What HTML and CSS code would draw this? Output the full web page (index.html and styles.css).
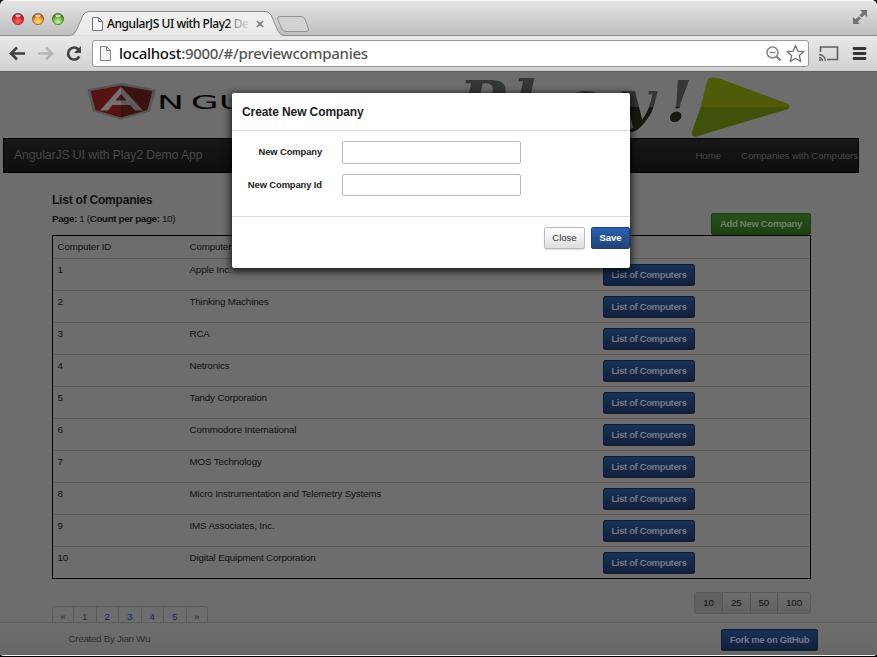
FILE: index.html
```html
<!DOCTYPE html>
<html lang="en">
<head>
<meta charset="utf-8">
<title>AngularJS UI with Play2 Demo App</title>
<link rel="stylesheet" href="styles.css">
</head>
<body>
<div class="window">
  <header class="tabstrip">
    <svg class="tabs" width="877" height="36" viewBox="0 0 877 36">
      <defs>
        <linearGradient id="strip" x1="0" y1="0" x2="0" y2="1"><stop offset="0" stop-color="#e6e6e6"/><stop offset="1" stop-color="#bdbdbd"/></linearGradient>
        <linearGradient id="tab" x1="0" y1="0" x2="0" y2="1"><stop offset="0" stop-color="#f1f1f1"/><stop offset="1" stop-color="#e8e8e8"/></linearGradient>
        <linearGradient id="fade" gradientUnits="userSpaceOnUse" x1="228" y1="0" x2="252" y2="0"><stop offset="0" stop-color="#111"/><stop offset=".2" stop-color="#888"/><stop offset="1" stop-color="#e8e8e8"/></linearGradient>
        <radialGradient id="red" cx=".5" cy=".72" r=".65"><stop offset="0" stop-color="#ff6b69"/><stop offset=".55" stop-color="#e7313b"/><stop offset="1" stop-color="#8d1822"/></radialGradient>
        <radialGradient id="amber" cx=".5" cy=".75" r=".65"><stop offset="0" stop-color="#ffe07a"/><stop offset=".55" stop-color="#f3a83b"/><stop offset="1" stop-color="#96591a"/></radialGradient>
        <radialGradient id="green" cx=".5" cy=".75" r=".65"><stop offset="0" stop-color="#cdf59b"/><stop offset=".55" stop-color="#7cc352"/><stop offset="1" stop-color="#3d7325"/></radialGradient>
      </defs>
      <rect width="877" height="36" fill="url(#strip)"/>
      <path d="M0 .5H877" stroke="#f4f4f4"/>
      <path d="M0 0H4Q1 1 0 4ZM877 0H873Q876 1 877 4Z" fill="#111"/>
      <path d="M0 35.5H70Q74 35 76 31L83 15Q85 11.5 89 11.5H265Q269 11.5 271 15L278 31Q280 35 284 35.5H877" fill="url(#tab)" stroke="#8c8c8c"/>
      <path d="M76 36H279" stroke="#e8e8e8"/>
      <path d="M280 16.500H301Q304 16.500 305 19L308.500 29Q309 31.500 306 31.500H286Q283 31.500 282 29L277.500 19Q277 16.500 280 16.500Z" fill="#d2d2d2" stroke="#919191"/>
      <g stroke-width=".8"><circle cx="18" cy="19" r="5.600" fill="url(#red)" stroke="#8c3035"/><circle cx="38" cy="19" r="5.600" fill="url(#amber)" stroke="#91602a"/><circle cx="58" cy="19" r="5.600" fill="url(#green)" stroke="#4b7a38"/></g>
      <g fill="#fff" opacity=".7"><ellipse cx="18" cy="15.800" rx="2.600" ry="1.400"/><ellipse cx="38" cy="15.800" rx="2.600" ry="1.400"/><ellipse cx="58" cy="15.800" rx="2.600" ry="1.400"/></g>
      <path d="M92.500 17.500H98.500L102.500 21.500V30.500H92.500ZM98.500 17.500V21.500H102.500" fill="#f7f7f7" stroke="#777"/>
      <text class="tab-title" x="107" y="28" textLength="142" fill="url(#fade)">AngularJS UI with Play2 De</text>
      <path d="M257 21L263 27M263 21L257 27" stroke="#777" stroke-width="1.700"/>
      <g fill="#737373"><path d="M860 10H867V17L864.700 14.700L861.500 17.500L859.500 15.500L862.300 12.300Z"/><path d="M853 17V24H860L857.700 21.700L861 18.500L859 16.500L855.300 19.300Z"/></g>
    </svg>
  </header>
  <div class="toolbar">
    <svg class="nav" width="92" height="35" viewBox="0 36 92 35">
      <g fill="none" stroke-width="2.600"><path d="M25 53.500H12M17 47.500L11 53.500L17 59.500" stroke="#424242"/><path d="M38 53.500H51M46 47.500L52 53.500L46 59.500" stroke="#b5b5b5"/><path d="M78.500 49.500A6 6 0 1 0 79.300 56.500" stroke="#424242"/></g>
      <path d="M81 46V53H74Z" fill="#424242"/>
    </svg>
    <div class="address">
      <svg width="14" height="18" viewBox="0 0 14 18"><path d="M1.500 1.500H7.500L11.500 5.500V15.500H1.500ZM7.500 1.500V5.500H11.500" fill="#f3f3f3" stroke="#7e7e7e"/></svg>
      <svg class="url" width="260" height="24"><text x="6" y="17" textLength="249"><tspan fill="#111">localhost</tspan><tspan fill="#555">:9000/#/previewcompanies</tspan></text></svg>
      <svg class="marks" width="42" height="24" viewBox="765 41 42 24"><g fill="none" stroke="#858585"><circle cx="771.500" cy="52.500" r="5.500" stroke-width="1.500"/><path d="M768.500 52.500H774.500" stroke-width="1.400"/><path d="M775.500 56.500L779.500 60.500" stroke-width="2.300"/><path d="M794.500 45.500L796.900 51.200L802.900 51.600L798.300 55.500L799.700 61.500L794.500 58.300L789.300 61.500L790.700 55.500L786.100 51.600L792.100 51.200Z" stroke-width="1.300" stroke="#707070" stroke-linejoin="round"/></g></svg>
    </div>
    <svg width="68" height="35" viewBox="809 36 68 35"><g fill="none" stroke="#626262"><path d="M820.500 52V47H837.500V59.500H827" stroke-width="1.600"/><path d="M819 54.500A6.500 6.500 0 0 1 825.500 61M819 57.500A3.500 3.500 0 0 1 822.500 61" stroke-width="1.400"/></g><circle cx="820" cy="60" r="1.100" fill="#626262"/><path d="M854 48.500H865M854 53.500H865M854 58.500H865" stroke="#353535" stroke-width="2.800" stroke-linecap="round"/></svg>
  </div>

  <main class="page">
    <svg class="banner" width="877" height="66" viewBox="0 72 877 66">
      <defs><linearGradient id="play" gradientUnits="userSpaceOnUse" x1="0" y1="-41" x2="0" y2="11"><stop offset="0" stop-color="#333736"/><stop offset=".51" stop-color="#333736"/><stop offset=".51" stop-color="#171911"/><stop offset="1" stop-color="#171911"/></linearGradient></defs>
      <path d="M87.500 89.500L121 83L156 89.500L150 111.500L121 119.500L93 111.500Z" fill="#555"/>
      <path d="M90.500 91L121 85.500V117.500L95.500 110Z" fill="#571311"/>
      <path d="M121 85.500L152.500 91L147.500 110L121 117.500Z" fill="#3d1212"/>
      <path d="M121 87L100 110.500H108L112.500 105H121V100.500H115.500L121 94Z" fill="#737373"/>
      <path d="M121 87L143 110.500H135L130 105H121V100.500H126.500L121 94Z" fill="#5d5d5d"/>
      <text class="angular" transform="translate(157 109) scale(1.800 1)" x="0 18.800 34.300">NGU</text>
      <text class="play" transform="translate(0 121) scale(1.100 1)" y="0" x="417 466 509 562 605">Play!</text>
      <path d="M707 81Q708 77 714 77.500L721 79L788 104Q791 106 788 109L696 136.500Q691 137 692 132L701 106Z" fill="#4f5b09"/>
      <path d="M701 107H789.500L788 109L753 119L696 136.500Q691 137 692 132Z" fill="#40520a"/>
    </svg>
    <nav class="navbar"><span class="brand">AngularJS UI with Play2 Demo App</span><span>Home</span><span class="companies">Companies with Computers</span></nav>
    <div class="content">
      <div class="heading">
        <div><h1>List of Companies</h1><p><b>Page:</b> 1 (<b>Count per page:</b> 10)</p></div>
        <button class="btn green">Add New Company</button>
      </div>
      <div class="table">
        <div class="row head"><span>Computer ID</span><span>Computer</span></div>
        <div class="row"><span>1</span><span>Apple Inc.</span><button class="btn blue">List of Computers</button></div>
        <div class="row"><span>2</span><span>Thinking Machines</span><button class="btn blue">List of Computers</button></div>
        <div class="row"><span>3</span><span>RCA</span><button class="btn blue">List of Computers</button></div>
        <div class="row"><span>4</span><span>Netronics</span><button class="btn blue">List of Computers</button></div>
        <div class="row"><span>5</span><span>Tandy Corporation</span><button class="btn blue">List of Computers</button></div>
        <div class="row"><span>6</span><span>Commodore International</span><button class="btn blue">List of Computers</button></div>
        <div class="row"><span>7</span><span>MOS Technology</span><button class="btn blue">List of Computers</button></div>
        <div class="row"><span>8</span><span>Micro Instrumentation and Telemetry Systems</span><button class="btn blue">List of Computers</button></div>
        <div class="row"><span>9</span><span>IMS Associates, Inc.</span><button class="btn blue">List of Computers</button></div>
        <div class="row"><span>10</span><span>Digital Equipment Corporation</span><button class="btn blue">List of Computers</button></div>
      </div>
      <div class="paging">
        <div class="pages"><span>«</span><span>1</span><span>2</span><span>3</span><span>4</span><span>5</span><span>»</span></div>
        <div class="sizes"><span class="active">10</span><span>25</span><span>50</span><span class="wide">100</span></div>
      </div>
    </div>
    <footer class="footer"><span>Created By Jian Wu</span><button class="btn blue">Fork me on GitHub</button></footer>
    <section class="modal">
      <h2>Create New Company</h2>
      <div class="form"><label>New Company</label><input class="first"><label>New Company Id</label><input></div>
      <div class="actions"><button class="btn close">Close</button><button class="btn save">Save</button></div>
    </section>
  </main>
</div>
</body>
</html>
```

FILE: styles.css
```css
* { box-sizing: border-box; }
body { margin: 0; background: #000; font: 9.8px/15px "Liberation Sans", Arial, sans-serif; letter-spacing: -.16px; color: #111; overflow: hidden; }
svg { display: block; flex: none; letter-spacing: 0; }
.window { width: 877px; height: 657px; }
.tabstrip { height: 36px; }
.tab-title { font: 500 12px "Noto Sans", sans-serif; }
.toolbar { display: flex; height: 35px; background: linear-gradient(#e8e8e8, #d3d3d3); border-bottom: 1px solid #c9cccb; }
.address { display: flex; width: 717px; height: 27px; margin-top: 4px; padding: 4px 0 0 6px; border: 1px solid #999; border-radius: 3px; background: #fff; }
.url { margin-top: -3px; font: 500 15px "Noto Sans", sans-serif; }
.marks { margin: -4px 0 0 auto; }
.page { position: relative; display: flex; flex-direction: column; height: 585px; background: #6d6d6d; border-bottom: 1px solid #f5f5f5; border-top: 1px solid #626464; border-radius: 0 0 4px 4px; overflow: hidden; }
.angular { font: 20px "DejaVu Sans", sans-serif; fill: #050505; }
.play { font: italic bold 56px "DejaVu Serif", serif; fill: url(#play); }
.navbar { display: flex; flex: none; width: 856px; height: 35px; margin-left: 3px; padding-left: 10px; align-items: center; border: 1px solid #000; background: linear-gradient(#181818, #0e0e0e); color: #484848; white-space: nowrap; letter-spacing: -.14px; }
.brand { margin-right: auto; font-size: 12.2px; letter-spacing: -.08px; }
.companies { margin-left: 20px; }
.content { flex: none; width: 759px; height: 449px; margin-left: 52px; }
.heading { display: flex; justify-content: space-between; height: 62px; }
h1 { margin: 18px 0 4px; font-size: 12px; line-height: 18px; letter-spacing: -.22px; }
p { margin: -1px 0 0; line-height: 13px; letter-spacing: -.35px; }
.btn { height: 22px; padding: 0; border: 1px solid #101d30; border-radius: 2px; font: bold 9.5px/18px "Liberation Sans", Arial, sans-serif; letter-spacing: -.36px; white-space: nowrap; }
.green { width: 100px; margin-top: 40px; background: linear-gradient(#275119, #1d4110); border-color: #1c3911; color: #737d70; letter-spacing: -.3px; }
.blue { width: 92px; background: linear-gradient(#18315a, #102039); color: #73798a; }
.table { border: 1px solid #000; height: 344px; }
.row { display: grid; grid-template-columns: 132px 413px 92px; height: 32px; padding: 5px 0 0 5px; border-top: 1px solid #5b5b5b; }
.row.head { height: 22px; padding-top: 3px; border: 0; }
.row span { margin: -2px 0 0 -.5px; }
.row.head span { margin-top: 0; }
.paging { display: flex; justify-content: space-between; align-items: flex-start; }
.pages, .sizes { display: flex; border: 1px solid #5b5b5b; border-radius: 3px; text-align: center; }
.pages { height: 30px; margin-top: 27px; color: #16294d; }
.pages span { width: 22.5px; padding-top: 2px; border-left: 1px solid #5b5b5b; }
.pages span:first-child { border-left: 0; width: 20px; }
.pages span:last-child { width: 21.5px; }
.pages span:nth-child(2) { color: #333; }
.sizes { height: 22px; margin-top: 13px; line-height: 20px; background: linear-gradient(#6d6d6d, #626262); }
.sizes span { width: 27.5px; border-left: 1px solid #555; }
.sizes .active { width: 27px; border-left: 0; background: #606060; }
.sizes .wide { width: 33px; }
.footer { display: flex; flex: none; position: relative; justify-content: space-between; height: 34px; padding: 6px 59px 0 68.5px; border-top: 1px solid #5c5c5c; background: linear-gradient(#6d6d6d, #686868); color: #303030; letter-spacing: -.1px; }
.footer span { padding-top: 2px; letter-spacing: -.3px; }
.footer .btn { width: 97px; }
.modal { position: absolute; left: 232px; top: 21px; width: 398px; height: 175px; background: #fff; border-radius: 2px; box-shadow: 0 2px 7px 2px rgba(0,0,0,.7); color: #222; }
h2 { height: 38px; margin: 0; padding: 10px; border-bottom: 1px solid #ddd; font-size: 12px; line-height: 18px; letter-spacing: -.1px; }
.form { display: grid; grid-template-columns: 90px 179px; grid-auto-rows: 33px; column-gap: 20px; height: 86px; padding-top: 10px; border-bottom: 1px solid #ddd; }
label { padding-top: 3px; font-size: 9.4px; font-weight: bold; letter-spacing: -.1px; text-align: right; }
input { width: 179px; height: 22px; border: 1px solid #bbb; border-radius: 2px; background: #fff; }
.first { height: 23px; }
.actions { display: flex; justify-content: flex-end; gap: 6px; padding-top: 10px; }
.close { width: 41px; border-color: #bbb; background: linear-gradient(#fff, #dedede); color: #333; font-weight: normal; letter-spacing: 0; box-shadow: 0 1px 1px #ddd; }
.save { width: 39px; background: linear-gradient(#2960b1, #214278); border-color: #1d3e75; color: #fff; letter-spacing: -.1px; }
```
